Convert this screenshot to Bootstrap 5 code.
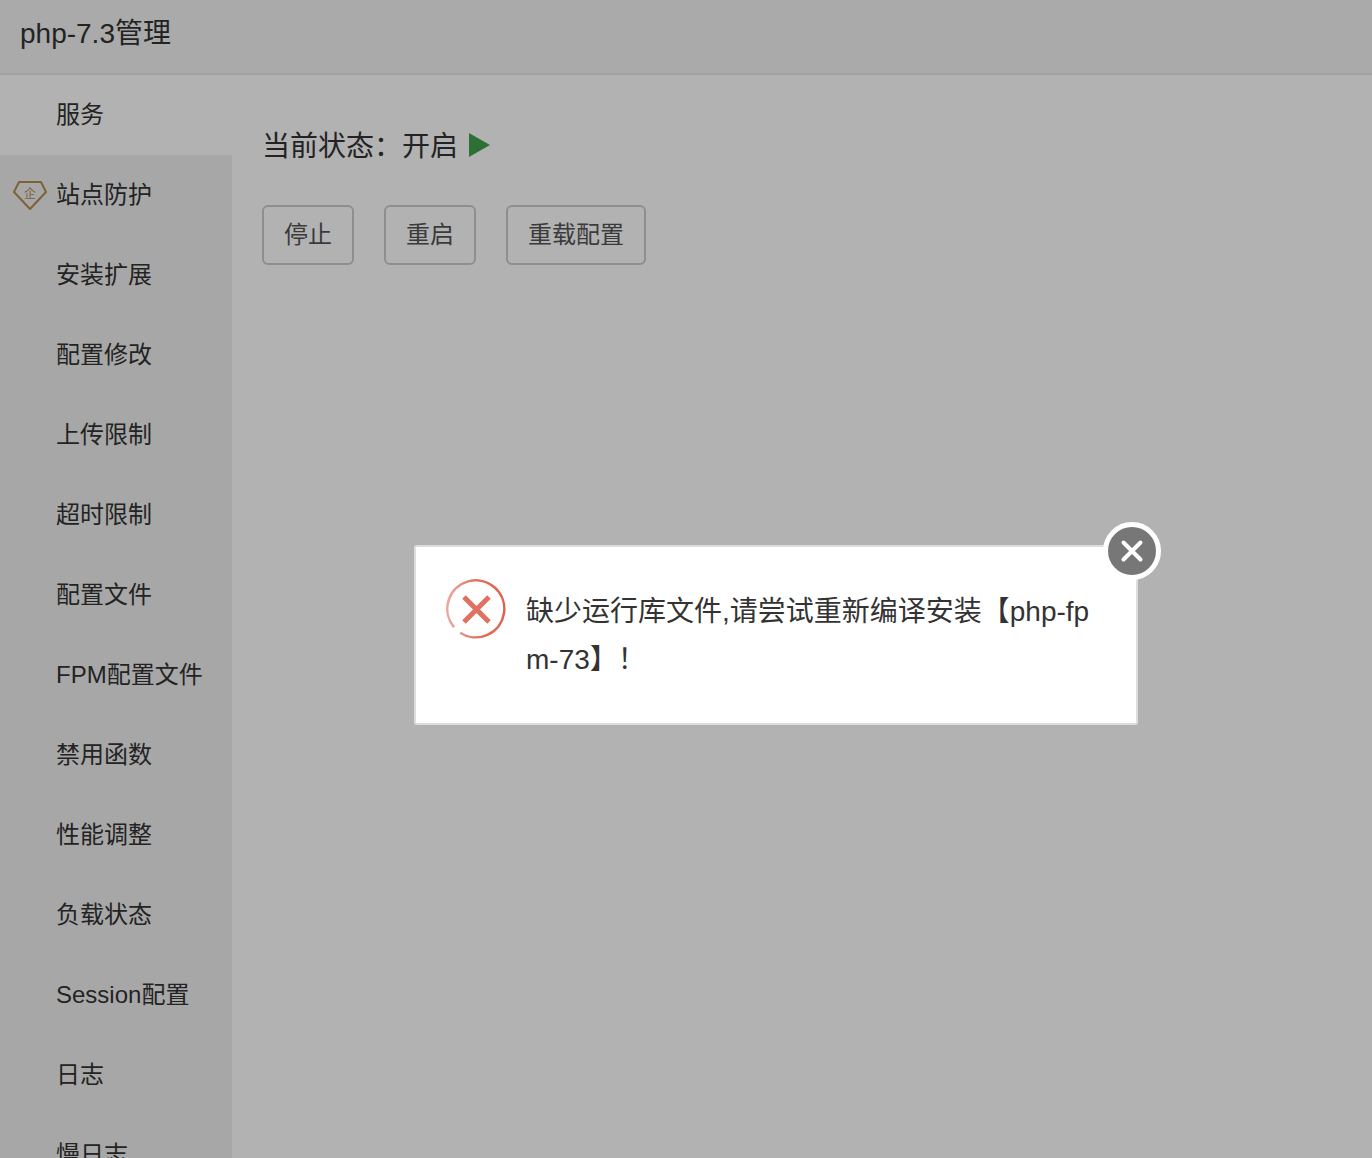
<!DOCTYPE html>
<html lang="zh-CN">
<head>
<meta charset="utf-8">
<title>php-7.3管理</title>
<link href="https://cdn.jsdelivr.net/npm/bootstrap@5.3.0/dist/css/bootstrap.min.css" rel="stylesheet">
<style>
html,body{height:100%;overflow:hidden}
body{font-family:"Liberation Sans","Noto Sans CJK SC",sans-serif;color:#333;background:#fff}
.pm-title{height:75px;font-size:28px;line-height:67px;padding-left:20px;background:#f4f4f4;border-bottom:2px solid #e8e8e8}
.pm-side{width:232px;background:#f0f0f0;flex:none}
.pm-item{height:80px;line-height:80px;font-size:24px;padding-left:56px;position:relative;white-space:nowrap}
.pm-item.is-on{background:#fff}
.pm-gem{position:absolute;left:13px;top:25px;width:34px;height:31px}
.pm-main{padding:51px 30px 0}
.pm-status{font-size:28px;line-height:42px;height:42px;color:#333}
.pm-play{width:21px;height:24px;margin-left:11px;vertical-align:-1px}
.pm-btns{margin-top:37px;gap:30px}
.pm-btn{height:60px;padding:0 20px;font-size:24px;line-height:56px;color:#555;background:transparent;border:2px solid #ccc;border-radius:6px}
.pm-shade{position:fixed;inset:0;background:rgba(0,0,0,.3)}
.pm-dialog{position:fixed;left:414px;top:545px;width:724px;height:180px;background:#fff;border:2px solid #ddd;border-radius:3px;padding:29px 30px 0 30px}
.pm-err{width:60px;height:60px;flex:none;margin-right:20px;margin-top:3px}
.pm-msg{font-size:28px;line-height:48px;word-break:break-all;width:566px;margin-top:12px;color:#333}
.pm-close{position:fixed;left:1103px;top:522px;width:58px;height:58px;border-radius:50%;background:#777;border:5px solid #fff;padding:0;display:flex;align-items:center;justify-content:center}
</style>
</head>
<body>
<div class="pm-title">php-7.3管理</div>
<div class="d-flex" style="height:calc(100vh - 75px)">
  <div class="pm-side overflow-hidden">
    <div class="pm-item is-on">服务</div>
    <div class="pm-item">
      <svg class="pm-gem" viewBox="0 0 34 31"><path d="M6 2H28L33 12 17 29 1 12Z" fill="none" stroke="#b28e50" stroke-width="2" stroke-linejoin="round"/><text x="17" y="18" font-size="12" text-anchor="middle" fill="#b28e50" font-family="Noto Sans CJK SC">企</text></svg>
      站点防护</div>
    <div class="pm-item">安装扩展</div>
    <div class="pm-item">配置修改</div>
    <div class="pm-item">上传限制</div>
    <div class="pm-item">超时限制</div>
    <div class="pm-item">配置文件</div>
    <div class="pm-item">FPM配置文件</div>
    <div class="pm-item">禁用函数</div>
    <div class="pm-item">性能调整</div>
    <div class="pm-item">负载状态</div>
    <div class="pm-item">Session配置</div>
    <div class="pm-item">日志</div>
    <div class="pm-item">慢日志</div>
  </div>
  <div class="pm-main flex-grow-1">
    <div class="pm-status">当前状态：开启<svg class="pm-play" viewBox="0 0 21 24"><path d="M0 0L21 12 0 24Z" fill="#3fa34a"/></svg></div>
    <div class="d-flex pm-btns">
      <button type="button" class="pm-btn">停止</button>
      <button type="button" class="pm-btn">重启</button>
      <button type="button" class="pm-btn">重载配置</button>
    </div>
  </div>
</div>
<div class="pm-shade"></div>
<div class="pm-dialog d-flex align-items-start">
  <svg class="pm-err" viewBox="0 0 60 60">
    <defs><linearGradient id="pmFade" x1="0" y1="0" x2="1" y2="0"><stop offset="0" stop-color="#eaa79c"/><stop offset="0.55" stop-color="#e0705f"/><stop offset="1" stop-color="#e0604f"/></linearGradient></defs>
    <path d="M8 48.2A28.5 28.5 0 1 1 14.2 53.7" fill="none" stroke="url(#pmFade)" stroke-width="2.5"/>
    <path d="M18 18L43 43M43 18L18 43" stroke="#e0705f" stroke-width="5" stroke-linecap="butt"/>
  </svg>
  <div class="pm-msg">缺少运行库文件,请尝试重新编译安装【php-fpm-73】！</div>
</div>
<button type="button" class="pm-close" aria-label="关闭"><svg width="24" height="24" viewBox="0 0 24 24"><path d="M3.5 3.5L20.500 20.500M20.500 3.500L3.500 20.500" stroke="#fff" stroke-width="4" stroke-linecap="round"/></svg></button>
</body>
</html>
